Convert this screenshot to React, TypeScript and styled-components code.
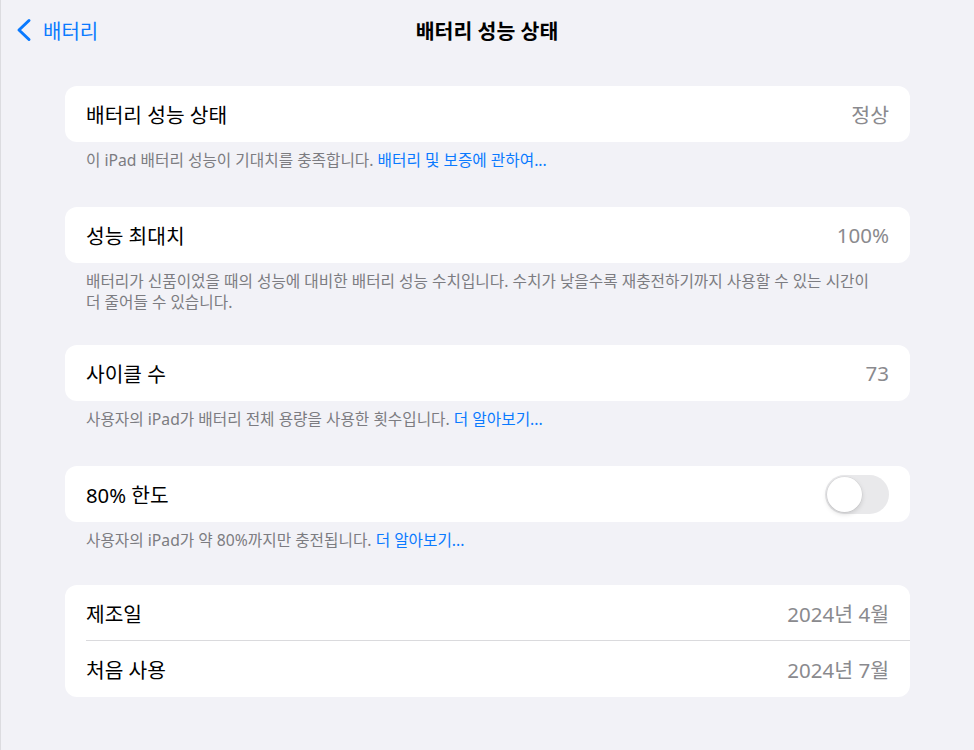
import React from "react";
import styled, { createGlobalStyle } from "styled-components";

const GlobalStyle = createGlobalStyle`
  html, body {
    margin: 0;
    padding: 0;
    background: #f2f2f7;
  }
  body {
    font-family: "Noto Sans", "Noto Sans CJK KR", sans-serif;
    -webkit-font-smoothing: antialiased;
  }
`;

const Page = styled.div`
  width: 974px;
  min-height: 750px;
  background: #f2f2f7;
  border-left: 1px solid #dcdce0;
  box-sizing: border-box;
`;

const NavBar = styled.div`
  height: 60px;
  display: grid;
  grid-template-columns: 1fr auto 1fr;
  align-items: center;
  padding: 0 16px 0 15px;
`;

const BackButton = styled.div`
  display: flex;
  align-items: center;
  gap: 11px;
  color: #0a7aff;
  font-size: 20px;
`;

const Title = styled.div`
  font-size: 20.5px;
  font-weight: 700;
  color: #000;
`;

const Content = styled.div`
  padding: 26px 64px 0 64px;
  display: flex;
  flex-direction: column;
`;

const Card = styled.div`
  background: #fff;
  border-radius: 12px;
  overflow: hidden;
`;

const Row = styled.div<{ $divider?: boolean }>`
  height: 56px;
  display: flex;
  align-items: center;
  justify-content: space-between;
  padding: 0 21px;
  position: relative;
  ${(p) =>
    p.$divider &&
    `
    &::after {
      content: "";
      position: absolute;
      left: 21px;
      right: 0;
      bottom: 0;
      height: 1px;
      background: #dadadd;
    }
  `}
`;

const Label = styled.span`
  font-size: 20.3px;
  color: #000;
`;

const Value = styled.span`
  font-size: 20.5px;
  color: #8a8a8e;
`;

const Footer = styled.div<{ $gap?: number }>`
  padding: 8px 21px 0 21px;
  margin-bottom: ${(p) => p.$gap ?? 36}px;
  font-size: 15.7px;
  line-height: 21px;
  color: #7c7c81;
`;

const Link = styled.span`
  color: #0a7aff;
`;

const Track = styled.div<{ $on?: boolean }>`
  width: 64px;
  height: 39px;
  border-radius: 20px;
  background: ${(p) => (p.$on ? "#34c759" : "#e9e9eb")};
  display: flex;
  align-items: center;
  justify-content: ${(p) => (p.$on ? "flex-end" : "flex-start")};
  padding: 2px;
  box-sizing: border-box;
`;

const Knob = styled.div`
  width: 35px;
  height: 35px;
  border-radius: 50%;
  background: #fff;
  box-shadow: 0 2px 5px rgba(0, 0, 0, 0.15), 0 0 0 0.5px rgba(0, 0, 0, 0.06);
`;

const Chevron = () => (
  <svg width="16" height="24" viewBox="0 0 16 24">
    <polyline
      points="13,2.5 3,12 13,21.5"
      fill="none"
      stroke="#0a7aff"
      strokeWidth="3"
      strokeLinecap="round"
      strokeLinejoin="round"
    />
  </svg>
);

export default function App() {
  return (
    <>
      <GlobalStyle />
      <Page>
        <NavBar>
          <BackButton>
            <Chevron />
            <span>배터리</span>
          </BackButton>
          <Title>배터리 성능 상태</Title>
          <div />
        </NavBar>
        <Content>
          <Card>
            <Row>
              <Label>배터리 성능 상태</Label>
              <Value>정상</Value>
            </Row>
          </Card>
          <Footer>
            이 iPad 배터리 성능이 기대치를 충족합니다. <Link>배터리 및 보증에 관하여...</Link>
          </Footer>

          <Card>
            <Row>
              <Label>성능 최대치</Label>
              <Value>100%</Value>
            </Row>
          </Card>
          <Footer $gap={32}>
            배터리가 신품이었을 때의 성능에 대비한 배터리 성능 수치입니다. 수치가 낮을수록 재충전하기까지 사용할 수 있는 시간이
            <br />더 줄어들 수 있습니다.
          </Footer>

          <Card>
            <Row>
              <Label>사이클 수</Label>
              <Value>73</Value>
            </Row>
          </Card>
          <Footer>
            사용자의 iPad가 배터리 전체 용량을 사용한 횟수입니다. <Link>더 알아보기...</Link>
          </Footer>

          <Card>
            <Row>
              <Label>80% 한도</Label>
              <Track>
                <Knob />
              </Track>
            </Row>
          </Card>
          <Footer $gap={34}>
            사용자의 iPad가 약 80%까지만 충전됩니다. <Link>더 알아보기...</Link>
          </Footer>

          <Card>
            <Row $divider>
              <Label>제조일</Label>
              <Value>2024년 4월</Value>
            </Row>
            <Row>
              <Label>처음 사용</Label>
              <Value>2024년 7월</Value>
            </Row>
          </Card>
        </Content>
      </Page>
    </>
  );
}
